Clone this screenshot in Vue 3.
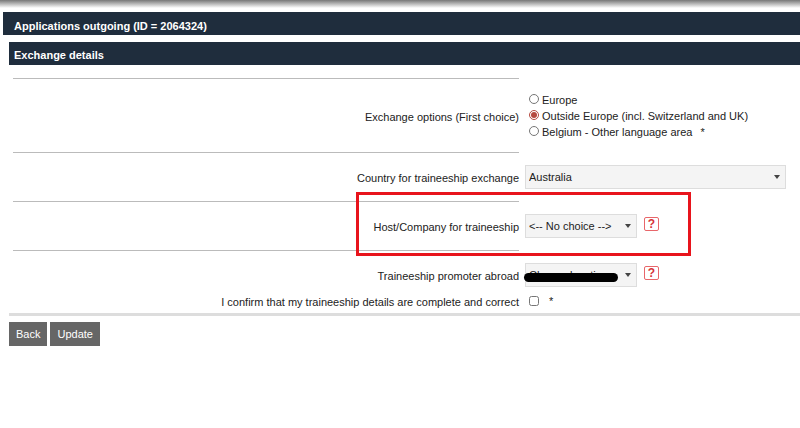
<script setup>
import { ref } from 'vue'
const option = ref('outside')
const confirmed = ref(false)
</script>

<template>
  <div class="page">
    <div class="topshade"></div>
    <h1 class="title">Applications outgoing (ID = 2064324)</h1>
    <section class="details">
      <h2 class="subtitle">Exchange details</h2>
      <div class="form">
        <div class="row row-options">
          <div class="label">Exchange options (First choice)</div>
          <div class="field radios">
            <label><input v-model="option" type="radio" value="europe" />Europe</label>
            <label><input v-model="option" type="radio" value="outside" />Outside Europe (incl. Switzerland and UK)</label>
            <label><input v-model="option" type="radio" value="belgium" />Belgium - Other language area<span class="radio-star">*</span></label>
          </div>
        </div>
        <div class="row row-country">
          <div class="label">Country for traineeship exchange</div>
          <div class="field">
            <div class="select wide"><select><option>Australia</option></select></div>
          </div>
        </div>
        <div class="row row-host">
          <div class="label">Host/Company for traineeship</div>
          <div class="field">
            <div class="select"><select><option>&lt;-- No choice --&gt;</option></select></div>
            <span class="help">?</span>
          </div>
        </div>
        <div class="row row-promoter">
          <div class="label">Traineeship promoter abroad</div>
          <div class="field">
            <div class="select">
              <select><option>Choose location</option></select>
              <span class="scribble"></span>
            </div>
            <span class="help">?</span>
          </div>
        </div>
        <div class="row row-confirm">
          <div class="label">I confirm that my traineeship details are complete and correct</div>
          <div class="field">
            <input v-model="confirmed" class="check" type="checkbox" />
            <span class="star">*</span>
          </div>
        </div>
      </div>
      <div class="buttons">
        <button type="button">Back</button>
        <button type="button">Update</button>
      </div>
    </section>
    <div class="redbox"></div>
  </div>
</template>

<style scoped>
.page {
  position: relative;
  width: 800px;
  height: 428px;
  overflow: hidden;
  background: #fff;
  font-family: "Liberation Sans", Arial, sans-serif;
  font-size: 11px;
  color: #222;
}

.topshade {
  height: 8px;
  margin-bottom: 4px;
  background: linear-gradient(#777, #fff);
}

.title,
.subtitle {
  margin: 0;
  height: 23px;
  font-size: 11px;
  font-weight: bold;
  color: #fff;
  background: #1f2d3d;
}

.title {
  margin-left: 3px;
  padding-left: 11px;
  line-height: 29px;
}

.details {
  margin: 7px 0 0 9px;
}

.subtitle {
  padding-left: 5px;
  line-height: 26px;
}

.form {
  margin-top: 13px;
  padding-left: 4px;
  border-bottom: 3px solid #ddd;
}

.row {
  display: flex;
}

.label {
  width: 506px;
  flex: none;
  box-sizing: border-box;
  display: flex;
  align-items: center;
  justify-content: flex-end;
  padding-top: 2px;
  border-top: 1px solid #bbb;
}

.field {
  display: flex;
  align-items: center;
  padding-left: 6px;
}

.row-options { height: 74px; }
.row-country { height: 49px; }
.row-host { height: 49px; }
.row-promoter { height: 39px; }
.row-confirm { height: 24px; }

.row-promoter .label,
.row-promoter .field {
  padding-top: 11px;
}

.row-confirm .label {
  border-top: 0;
}

.radios {
  flex-direction: column;
  align-items: flex-start;
  justify-content: center;
  padding-top: 2px;
}

.radios label {
  display: flex;
  align-items: center;
  height: 16px;
}

.radios input {
  width: 10px;
  height: 10px;
  margin: 0 3px 3px 4px;
  accent-color: #b5493f;
}

.radio-star {
  margin-left: 8px;
}

.select {
  position: relative;
  width: 112px;
  height: 24px;
}

.select.wide {
  width: 261px;
}

.select select {
  appearance: none;
  width: 100%;
  height: 100%;
  padding: 0 0 0 3px;
  font: inherit;
  color: #222;
  background: #f4f4f4;
  border: 1px solid #ddd;
  border-radius: 0;
}

.select::after {
  content: "";
  position: absolute;
  right: 6px;
  top: 10px;
  border-left: 3.5px solid transparent;
  border-right: 3.5px solid transparent;
  border-top: 4px solid #444;
}

.scribble {
  position: absolute;
  left: -1px;
  top: 10px;
  width: 94px;
  height: 9px;
  background: #000;
  border-radius: 5px;
}

.help {
  width: 13px;
  height: 12px;
  margin: -4px 0 0 7px;
  border: 1px solid #e8666a;
  border-radius: 2px;
  font-size: 12px;
  font-weight: bold;
  line-height: 12px;
  text-align: center;
  color: #d6333a;
}

.check {
  width: 10px;
  height: 10px;
  margin: 0 0 1px 4px;
}

.star {
  margin-left: 10px;
}

.buttons {
  display: flex;
  gap: 3px;
  margin-top: 6px;
}

.buttons button {
  height: 24px;
  padding: 0 7px;
  font: inherit;
  color: #fff;
  background: #666;
  border: 0;
  border-radius: 0;
}

.redbox {
  position: absolute;
  left: 356px;
  top: 192px;
  width: 329px;
  height: 58px;
  border: 3px solid #e8141c;
}
</style>

<style>
html,
body {
  margin: 0;
  background: #fff;
}
</style>
